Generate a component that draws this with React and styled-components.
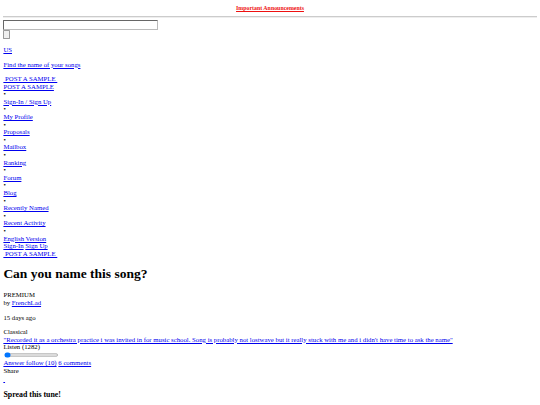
import React from "react";
import styled, { createGlobalStyle } from "styled-components";

// page is laid out at 1280px and zoomed down to the 540px window

const Global = createGlobalStyle`
  html {
    zoom: 0.421875;
    overflow: hidden;
  }
  body {
    margin: 8px;
    font-family: "Liberation Serif", "Times New Roman", serif;
    font-size: 16px;
    line-height: 18px;
    color: #000;
    background: #fff;
  }
  a {
    color: #0000ee;
  }
`;

const Announce = styled.div`
  text-align: center;
  padding: 4px 0 3px;
  font-size: 14px;
  line-height: 16px;
  font-weight: 700;

  a {
    color: #ee1111;
  }
`;

const Rule = styled.hr`
  margin: 7px 0 5px;
  border: 0;
  border-top: 1px solid #ccc;
  border-bottom: 1px solid #eee;
`;

const SearchForm = styled.form`
  margin: 0;
`;

const SearchInput = styled.input`
  display: block;
  width: 358px;
  height: 17px;
  padding: 1px 2px;
  margin: 0;
  border: 2px inset #bbb;
  border-radius: 2px;
`;

const SearchButton = styled.button`
  display: block;
  width: 16px;
  height: 21px;
  margin: 0;
  border: 1px solid #999;
  border-radius: 2px;
  background: #efefef;
`;

const Para = styled.p`
  margin: ${(props) => (props.tight ? "16.5px 0 0" : "16.5px 0")};
`;

const Line = styled.div``;

const Bullet = styled.div``;

const Title = styled.h1`
  font-size: 32px;
  line-height: 38px;
  margin: 21.44px 0;
`;

const Meta = styled.div``;

const Slider = styled.input`
  display: block;
  width: 129px;
  margin: 2px 2px;
`;

const Subhead = styled.h3`
  font-size: 18.72px;
  line-height: 22px;
  margin: 18.72px 0;
`;

const links = [
  "Sign-In / Sign Up",
  "My Profile",
  "Proposals",
  "Mailbox",
  "Ranking",
  "Forum",
  "Blog",
  "Recently Named",
  "Recent Activity",
  "English Version",
];

export default function App() {
  return (
    <>
      <Global />
      <Announce>
        <a href="#">Important Announcements</a>
      </Announce>
      <Rule />
      <SearchForm onSubmit={(e) => e.preventDefault()}>
        <SearchInput type="text" />
        <SearchButton type="submit" />
      </SearchForm>

      <Para>
        <a href="#">US</a>
      </Para>
      <Para>
        <a href="#">Find the name of your songs</a>
      </Para>

      <Para tight>
        <a href="#">{"\u00a0POST A SAMPLE\u00a0"}</a>
      </Para>
      <Line>
        <a href="#">POST A SAMPLE</a>
      </Line>
      {links.map((item) => (
        <React.Fragment key={item}>
          <Bullet>•</Bullet>
          <Line>
            <a href="#">{item}</a>
          </Line>
        </React.Fragment>
      ))}
      <Line>
        <a href="#">Sign-In</a> <a href="#">Sign Up</a>
      </Line>
      <Line>
        <a href="#">{"\u00a0POST A SAMPLE\u00a0"}</a>
      </Line>

      <Title>Can you name this song?</Title>
      <Meta>PREMIUM</Meta>
      <Meta>
        by <a href="#">FrenchLad</a>
      </Meta>
      <Para>15 days ago</Para>
      <Meta>Classical</Meta>
      <Meta>
        <a href="#">
          "Recorded it as a orchestra practice i was invited in for music
          school. Song is probably not lostwave but it really stuck with me and
          i didn't have time to ask the name"
        </a>
      </Meta>
      <Meta>Listen (1282)</Meta>
      <Slider type="range" defaultValue={0} />
      <Meta>
        <a href="#">Answer follow (10)</a> <a href="#">6 comments</a>
      </Meta>
      <Meta>Share</Meta>
      <Meta>
        <a href="#">{"\u00a0"}</a>
      </Meta>
      <Subhead>Spread this tune!</Subhead>
    </>
  );
}
